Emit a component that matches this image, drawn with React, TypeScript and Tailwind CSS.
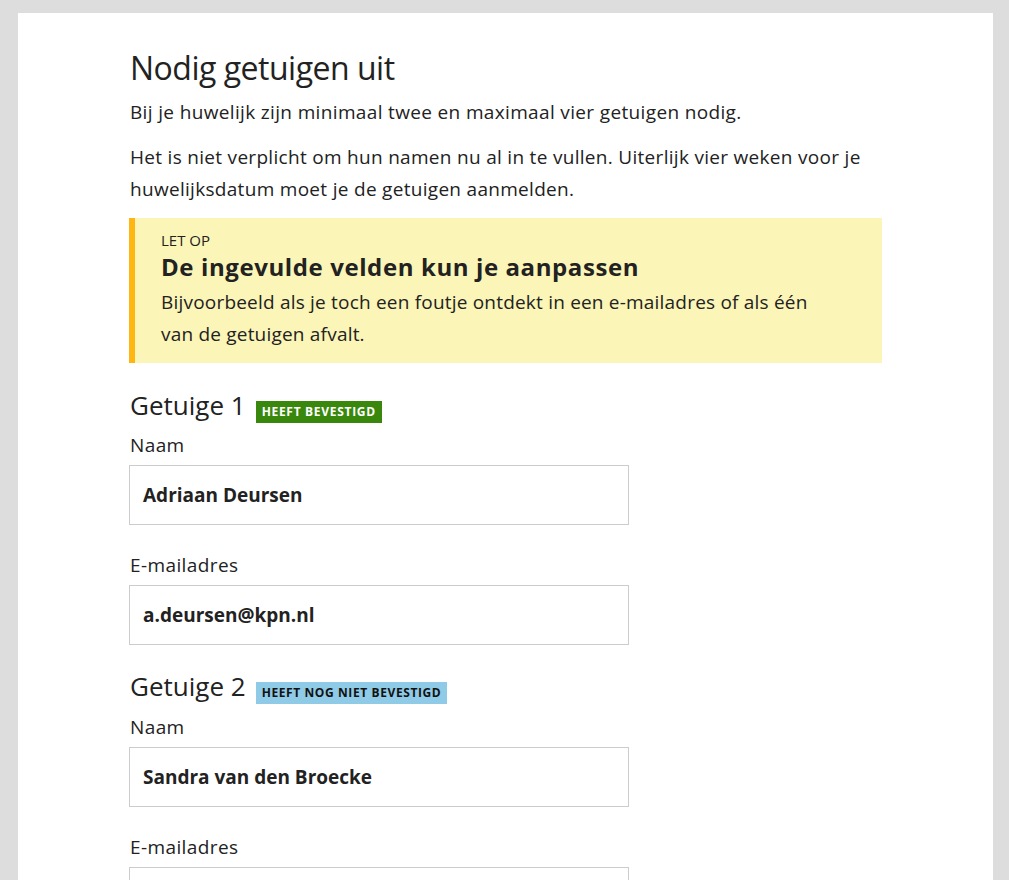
const font = { fontFamily: '"Open Sans", "Noto Sans", sans-serif' };

function Badge({ label, tone }: { label: string; tone: "green" | "blue" }) {
  return (
    <span
      className={
        tone === "green"
          ? "ml-[10px] inline-block bg-[#39870c] px-[6px] text-[12px] font-bold leading-[22px] tracking-[0.7px] text-white"
          : "ml-[10px] inline-block bg-[#8fcae7] px-[6px] text-[12px] font-bold leading-[22px] tracking-[0.6px] text-[#111]"
      }
    >
      {label}
    </span>
  );
}

function Field({ label, value, top }: { label: string; value: string; top: string }) {
  return (
    <div className={top}>
      <div className="text-[19px] leading-[24px] tracking-[0.4px] text-[#222]">{label}</div>
      <div className="-ml-px mt-2 flex h-[60px] w-[500px] items-center border border-[#cccccc] bg-white px-[13px] text-[19px] font-bold text-[#222]">
        {value}
      </div>
    </div>
  );
}

function Witness({ n, badge, tone, name, email, top, gap }: { n: number; badge: string; tone: "green" | "blue"; name: string; email: string; top: string; gap: string }) {
  return (
    <div className={top}>
      <div className="flex h-[32px] items-center">
        <h2 className="text-[26px] leading-[32px] text-[#222]">Getuige {n}</h2>
        <div className="mt-[10px]">
          <Badge label={badge} tone={tone} />
        </div>
      </div>
      <Field top={gap} label="Naam" value={name} />
      <Field top="mt-[28px]" label="E-mailadres" value={email} />
    </div>
  );
}

export default function App() {
  return (
    <div className="h-screen overflow-hidden bg-[#dddddd] px-[18px] pt-[13px]" style={font}>
      <div className="h-full w-[975px] bg-white pl-[112px] pt-[35px]">
        <div className="w-[753px]">
          <h1 className="text-[32px] leading-[40px] tracking-[-0.5px] text-[#222]">Nodig getuigen uit</h1>
          <p className="mt-2 text-[19px] leading-[32px] tracking-[0.35px] text-[#222]">
            Bij je huwelijk zijn minimaal twee en maximaal vier getuigen nodig.
          </p>
          <p className="mt-[13px] text-[19px] leading-[32px] tracking-[0.3px] text-[#222]">
            Het is niet verplicht om hun namen nu al in te vullen. Uiterlijk vier weken voor je huwelijksdatum moet je de getuigen aanmelden.
          </p>
          <div className="-ml-px mr-px mt-[13px] border-l-[6px] border-[#ffb612] bg-[#fbf5b7] pb-[13px] pl-[26px] pr-[40px] pt-[12px]">
            <div className="text-[15px] leading-[20px] text-[#222]">LET OP</div>
            <div className="mt-[2px] text-[24px] font-bold leading-[30px] tracking-[0.6px] text-[#222]">De ingevulde velden kun je aanpassen</div>
            <p className="mt-1 max-w-[672px] text-[19px] leading-[32px] tracking-[0.2px] text-[#222]">
              Bijvoorbeeld als je toch een foutje ontdekt in een e-mailadres of als één van de getuigen afvalt.
            </p>
          </div>
          <Witness top="mt-[26px]" gap="mt-[12px]" n={1} badge="HEEFT BEVESTIGD" tone="green" name="Adriaan Deursen" email="a.deursen@kpn.nl" />
          <Witness top="mt-[25px]" gap="mt-[13px]" n={2} badge="HEEFT NOG NIET BEVESTIGD" tone="blue" name="Sandra van den Broecke" email="" />
        </div>
      </div>
    </div>
  );
}
